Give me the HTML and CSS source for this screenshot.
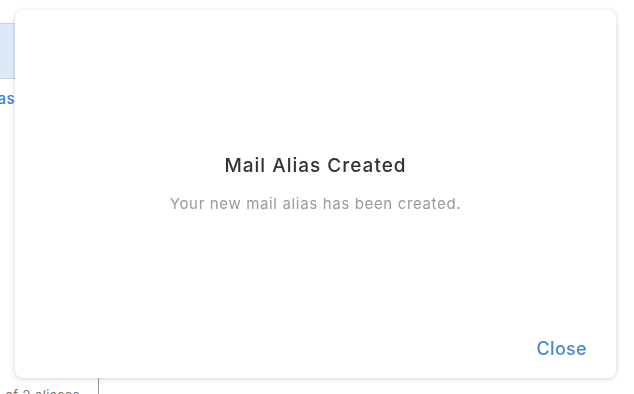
FILE: index.html
```html
<!DOCTYPE html>
<html>
<head>
  <meta charset="UTF-8">
  <title>Mail Alias Created</title>
  <link rel="stylesheet" href="styles.css">
</head>
<body>
  <div class="page">
    <div class="side">
      <div class="side-row selected"></div>
      <div class="side-link">New Alias</div>
    </div>
    <div class="page-footer">
      <div class="count">1 of 2 aliases</div>
      <div class="pager"></div>
    </div>
  </div>

  <div class="modal">
    <div class="modal-body">
      <h2 class="modal-title">Mail Alias Created</h2>
      <p class="modal-text">Your new mail alias has been created.</p>
    </div>
    <div class="modal-footer">
      <button class="close-btn">Close</button>
    </div>
  </div>
</body>
</html>
```

FILE: styles.css
```css
html, body {
  margin: 0;
  height: 100%;
}
body {
  background: #fff;
  font-family: Inter, 'Liberation Sans', Arial, sans-serif;
  overflow: hidden;
}

.page {
  display: flex;
  flex-direction: column;
  height: 394px;
}
.side {
  flex: 1;
  width: 15px;
  padding-top: 23px;
}
.side-row.selected {
  height: 54px;
  background: #dde9f6;
  border-top: 1px solid #c9d3de;
  border-bottom: 1px solid #c9d3de;
}
.side-link {
  display: flex;
  justify-content: flex-end;
  white-space: nowrap;
  margin-top: 10px;
  font-size: 15px;
  font-weight: 500;
  letter-spacing: 0.5px;
  color: #3b7dd3;
}

.page-footer {
  display: flex;
  height: 16px;
}
.count {
  width: 80px;
  padding-right: 18px;
  display: flex;
  justify-content: flex-end;
  white-space: nowrap;
  overflow: hidden;
  font-size: 13px;
  line-height: 16px;
  letter-spacing: 0.4px;
  padding-top: 9px;
  color: #777;
}
.pager {
  flex: 1;
  border-left: 1px solid #9a9a9a;
}

.modal {
  position: fixed;
  left: 15px;
  top: 10px;
  width: 601px;
  height: 368px;
  background: #fff;
  border-radius: 8px;
  box-shadow: 0 1px 5px rgba(0, 0, 0, 0.18);
  display: flex;
  flex-direction: column;
}
.modal-body {
  flex: 1;
  padding-top: 144px;
  text-align: center;
}
.modal-title {
  margin: 0;
  font-size: 19px;
  line-height: 24px;
  font-weight: 500;
  letter-spacing: 1px;
  color: #333;
}
.modal-text {
  margin: 16px 0 0;
  font-size: 15px;
  line-height: 20px;
  letter-spacing: 0.65px;
  color: #999;
}
.modal-footer {
  display: flex;
  justify-content: flex-end;
  padding: 0 29px 18px 0;
}
.close-btn {
  background: none;
  border: none;
  padding: 0;
  font-family: inherit;
  font-size: 18px;
  line-height: 22px;
  font-weight: 500;
  letter-spacing: 0.3px;
  color: #4a86d6;
  cursor: pointer;
}
```
